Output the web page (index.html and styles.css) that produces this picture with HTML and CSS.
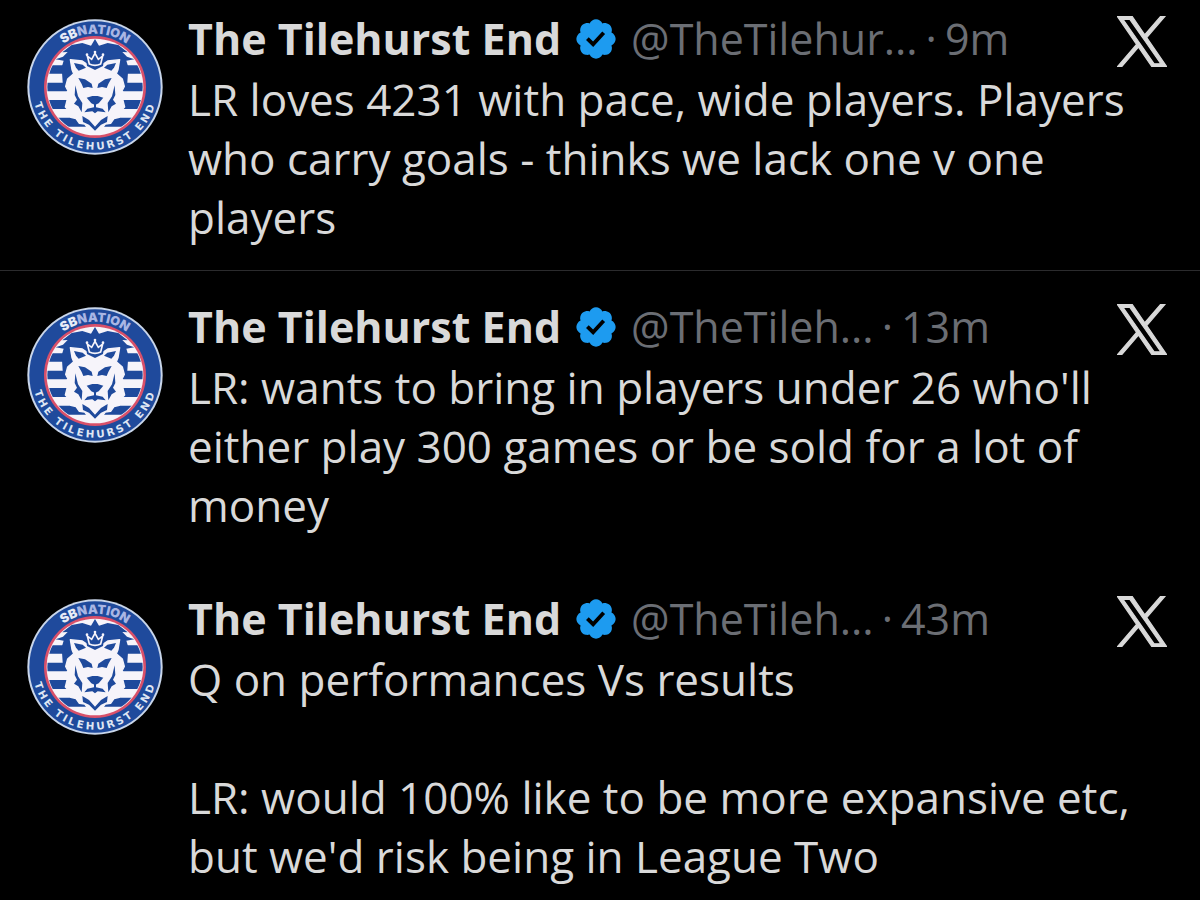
FILE: index.html
```
<!DOCTYPE html>
<html lang="en">
<head>
    <meta charset="UTF-8">
    <meta name="viewport" content="width=device-width, initial-scale=1.0">
    <title>The Tilehurst End</title>
    <link rel="stylesheet" href="styles.css">
</head>
<body>
    <!-- Shared icons -->
    <svg class="icon-defs" aria-hidden="true">
        <symbol id="crest" viewBox="22 27 408 408">
            <defs>
                <clipPath id="crest-inner"><circle cx="226" cy="231" r="143"/></clipPath>
                <path id="arc-top" d="M66 231a160 160 0 0 1 320 0"/>
                <path id="arc-bottom" d="M38 231a188 188 0 0 0 376 0"/>
            </defs>
            <circle cx="226" cy="231" r="203" fill="#c9d6ea"/>
            <circle cx="226" cy="231" r="197" fill="#1f4a9c"/>
            <circle cx="226" cy="231" r="153" fill="#d8506a"/>
            <circle cx="226" cy="231" r="145" fill="#f6f4fa"/>
            <!-- Hoops -->
            <g clip-path="url(#crest-inner)" fill="#1f4a9c">
                <path d="M80 166h292v25H80zM80 218h292v26H80zM80 270h292v27H80zM80 323h292v27H80z"/>
            </g>
            <!-- Mane -->
            <path fill="#1f4a9c" d="M226 87l12 20 26-8 32 6 28 22-16-1 14 14 22 8-24 4 6 20-4 60-96-28-96 28-4-60 6-20-24-4 22-8 14-14-16 1 28-22 32-6 26 8z"/>
            <path fill="#f6f4fa" stroke="#f6f4fa" stroke-width="4" stroke-linejoin="round" d="M152 149l36 4 20 14 18 5 18-5 20-14 36-4-5 30-5 12 18 16 6 22-7 14 9 12-6 16 5 20-12 12-4 19-16 4-10 14-16 2-12 16-19 14-19-14-12-16-16-2-10-14-16-4-4-19-12-12 5-20-6-16 9-12-7-14 6-22 18-16-5-12z"/>
            <g fill="#1f4a9c">
                <path d="M163 159l26 5 10 9-22 9-8-9zM289 159l-26 5-10 9 22 9 8-9z"/>
                <path d="M176 204l20 4 20 13 3 13-14-3-14 3-5-12zM276 204l-20 4-20 13-3 13 14-3 14 3 5-12z"/>
                <path d="M201 263l17-5h16l17 5-14 17-11 5-11-5z"/>
                <path d="M223 280h6v12l20 4 9 11-24-3-8 6-8-6-24 3 9-11 20-4z"/>
                <path d="M167 226l8 33 13 20-2 28-10-18-13-8 9-12-7-14zM285 226l-8 33-13 20 2 28 10-18 13-8-9-12 7-14z"/>
                <path d="M188 318l20 12 18 20 18-20 20-12-2 18-18 8-18 18-18-18-18-8z"/>
            </g>
            <!-- Crown -->
            <path fill="#1f4a9c" d="M196 126h60l-6 42-24 12-24-12z"/>
            <path fill="none" stroke="#f6f4fa" stroke-width="5" d="M203 138l6 24q17 8 34 0l6-24-13 10-10-18-10 18z"/>
            <circle cx="226" cy="126" r="4" fill="#f6f4fa"/>
            <circle cx="202" cy="134" r="4" fill="#f6f4fa"/>
            <circle cx="250" cy="134" r="4" fill="#f6f4fa"/>
            <text class="crest-brand"><textPath href="#arc-top" startOffset="50%"><tspan fill="#e8ecf6">SB</tspan><tspan fill="#a9b6e4">NATION</tspan></textPath></text>
            <text class="crest-name"><textPath href="#arc-bottom" startOffset="50%">THE TILEHURST END</textPath></text>
        </symbol>
        <symbol id="verified" viewBox="0 0 22 22">
            <path fill="#1d9bf0" d="M20.396 11c-.018-.646-.215-1.275-.57-1.816-.354-.54-.852-.972-1.438-1.246.223-.607.27-1.264.14-1.897-.131-.634-.437-1.218-.882-1.687-.47-.445-1.053-.75-1.687-.882-.633-.13-1.29-.083-1.897.14-.273-.587-.704-1.086-1.245-1.44S11.647 1.62 11 1.604c-.646.017-1.273.213-1.813.568s-.969.854-1.24 1.44c-.608-.223-1.267-.272-1.902-.14-.635.13-1.22.436-1.69.882-.445.47-.749 1.055-.878 1.688-.13.633-.08 1.29.144 1.896-.587.274-1.087.705-1.443 1.245-.356.54-.555 1.17-.574 1.817.02.647.218 1.276.574 1.817.356.54.856.972 1.443 1.245-.224.606-.274 1.263-.144 1.896.13.634.433 1.218.877 1.688.47.443 1.054.747 1.687.878.633.132 1.29.084 1.897-.136.274.586.705 1.084 1.246 1.439.54.354 1.17.551 1.816.569.647-.016 1.276-.213 1.817-.567s.972-.854 1.245-1.44c.604.239 1.266.296 1.903.164.636-.132 1.22-.447 1.68-.907.46-.46.776-1.044.908-1.681s.075-1.299-.165-1.903c.586-.274 1.084-.705 1.439-1.246.354-.54.551-1.17.569-1.816zM9.662 14.85l-3.429-3.428 1.293-1.302 2.072 2.072 4.4-4.794 1.347 1.246z"/>
        </symbol>
        <symbol id="x-logo" viewBox="0 0 1200 1227">
            <path fill="#d9d9d9" stroke="#d9d9d9" stroke-width="28" d="M714.163 519.284L1160.89 0H1055.03L667.137 450.887L357.328 0H0L468.492 681.821L0 1226.37H105.866L515.491 750.218L842.672 1226.37H1200L714.137 519.284ZM569.165 687.828L521.697 619.934L144.011 79.694H306.615L611.412 515.685L658.88 583.579L1055.08 1150.3H892.476L569.165 687.854Z"/>
        </symbol>
    </svg>

    <main class="feed">
        <article class="tweet tweet-first">
            <svg class="avatar" role="img" aria-label="The Tilehurst End crest"><use href="#crest"/></svg>
            <div class="tweet-content">
                <header class="tweet-header">
                    <span class="name">The Tilehurst End</span>
                    <svg class="verified" role="img" aria-label="Verified account"><use href="#verified"/></svg>
                    <span class="handle">@TheTilehur...</span>
                    <span class="dot">·</span>
                    <time class="time">9m</time>
                    <svg class="x-logo" role="img" aria-label="X"><use href="#x-logo"/></svg>
                </header>
                <p class="tweet-text">LR loves 4231 with pace, wide players. Players who carry goals - thinks we lack one v one players</p>
            </div>
        </article>

        <article class="tweet">
            <svg class="avatar" role="img" aria-label="The Tilehurst End crest"><use href="#crest"/></svg>
            <div class="tweet-content">
                <header class="tweet-header">
                    <span class="name">The Tilehurst End</span>
                    <svg class="verified" role="img" aria-label="Verified account"><use href="#verified"/></svg>
                    <span class="handle">@TheTileh...</span>
                    <span class="dot">·</span>
                    <time class="time">13m</time>
                    <svg class="x-logo" role="img" aria-label="X"><use href="#x-logo"/></svg>
                </header>
                <p class="tweet-text">LR: wants to bring in players under 26 who'll either play 300 games or be sold for a lot of money</p>
            </div>
        </article>

        <article class="tweet tweet-last">
            <svg class="avatar" role="img" aria-label="The Tilehurst End crest"><use href="#crest"/></svg>
            <div class="tweet-content">
                <header class="tweet-header">
                    <span class="name">The Tilehurst End</span>
                    <svg class="verified" role="img" aria-label="Verified account"><use href="#verified"/></svg>
                    <span class="handle">@TheTileh...</span>
                    <span class="dot">·</span>
                    <time class="time">43m</time>
                    <svg class="x-logo" role="img" aria-label="X"><use href="#x-logo"/></svg>
                </header>
                <p class="tweet-text">Q on performances Vs results</p>
                <p class="tweet-text">LR: would 100% like to be more expansive etc, but we'd risk being in League Two</p>
            </div>
        </article>
    </main>
</body>
</html>
```
FILE: styles.css
```
/* General Styles */
body {
    margin: 0;
    background-color: #000;
    color: #d9d9d9;
    font-family: "Open Sans", sans-serif;
}

.icon-defs {
    position: absolute;
    width: 0;
    height: 0;
}

/* Tweets */
.tweet {
    display: flex;
    gap: 25px;
    padding: 25px 33px 28px 27px;
}

.tweet-first {
    padding-top: 8px;
    padding-bottom: 23px;
    border-bottom: 1px solid #2b2b2d;
}

.tweet-last {
    padding-bottom: 8px;
}

.avatar {
    flex: none;
    width: 136px;
    height: 136px;
    margin-top: 11px;
}

.tweet-content {
    flex: 1;
    min-width: 0;
}

.tweet-header {
    display: flex;
    align-items: center;
    height: 62px;
    font-size: 43px;
    line-height: 62px;
    white-space: nowrap;
}

.name {
    font-weight: bold;
}

.verified {
    width: 46px;
    height: 46px;
    margin: 0 12px;
}

.handle,
.dot,
.time {
    color: #6b6e74;
}

.dot {
    margin: 0 8px;
}

.x-logo {
    width: 50px;
    height: 51px;
    margin-top: 4px;
    margin-left: auto;
    overflow: visible;
}

.tweet-text {
    margin: 0;
    font-size: 44px;
    line-height: 59px;
}

.tweet-text + .tweet-text {
    margin-top: 59px;
}

/* Crest lettering */
.crest-brand,
.crest-name {
    font-weight: bold;
    text-anchor: middle;
}

.crest-brand {
    font-family: Inter, sans-serif;
    font-weight: 900;
    font-size: 38px;
}

.crest-name {
    fill: #dfe6f3;
    font-family: "DejaVu Sans", sans-serif;
    font-size: 31px;
    letter-spacing: 8px;
}
```
